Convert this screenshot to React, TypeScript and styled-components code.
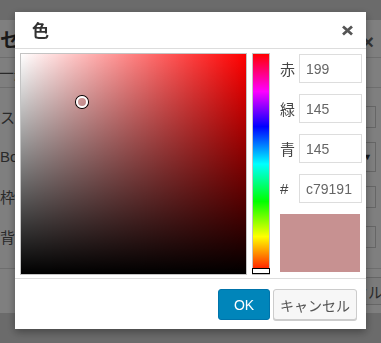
import React from 'react';
import styled, { createGlobalStyle } from 'styled-components';

const GlobalStyle = createGlobalStyle`
  html, body {
    margin: 0;
    padding: 0;
  }
  body {
    width: 381px;
    height: 343px;
    overflow: hidden;
    background: #d6d6d6;
    font-family: "Liberation Sans", "Noto Sans CJK JP", sans-serif;
  }
`;

// --- background page (the table-cell dialog behind) ---
const Page = styled.div`
  padding-top: 20px;
  height: 343px;
  box-sizing: border-box;
`;

const UnderPanel = styled.div`
  margin-left: -20px;
  width: 420px;
  height: 293px;
  background: #fff;
  display: flex;
  flex-direction: column;
  color: #555;
`;

const UnderHeader = styled.div`
  height: 38px;
  border-bottom: 1px solid #ddd;
  display: flex;
  align-items: center;
  justify-content: space-between;
  padding: 0 26px 0 20px;
  box-sizing: border-box;
`;

const UnderTitle = styled.div`
  font-size: 19px;
  font-weight: bold;
  color: #333;
`;

const UnderClose = styled.div`
  font-size: 20px;
  font-weight: bold;
  color: #666;
  margin-top: 8px;
`;

const UnderTabs = styled.div`
  height: 30px;
  border-bottom: 1px solid #ddd;
  display: flex;
  align-items: center;
  padding-left: 19px;
  font-size: 15px;
  box-sizing: border-box;
`;

const UnderForm = styled.div`
  flex: 1;
  display: flex;
  flex-direction: column;
  padding: 14px 24px 0 20px;
  gap: 11px;
  border-bottom: 1px solid #ddd;
`;

const UnderRow = styled.div`
  height: 29px;
  display: flex;
  align-items: center;
  justify-content: space-between;
  font-size: 15px;
`;

const UnderInput = styled.div<{ select?: boolean }>`
  width: 76px;
  height: ${p => (p.select ? 30 : 22)}px;
  border: 1px solid #ccc;
  box-sizing: border-box;
  display: flex;
  align-items: center;
  justify-content: flex-end;
  padding-right: 3px;
  font-size: 9px;
  color: #333;
`;

const UnderFooter = styled.div`
  height: 44px;
  display: flex;
  justify-content: flex-end;
  align-items: center;
  padding-right: 8px;
`;

const UnderButton = styled.div`
  height: 28px;
  width: 80px;
  padding: 0 8px;
  box-sizing: border-box;
  border: 1px solid #ccc;
  border-radius: 3px;
  background: #f7f7f7;
  display: flex;
  align-items: center;
  justify-content: flex-end;
  font-size: 15px;
`;

const Overlay = styled.div`
  position: fixed;
  inset: 0;
  background: rgba(0, 0, 0, 0.5);
`;

// --- colour dialog ---
const Dialog = styled.div`
  position: fixed;
  left: 15px;
  top: 12px;
  width: 351px;
  height: 317px;
  background: #fff;
  box-shadow: 0 3px 8px rgba(0, 0, 0, 0.35);
  display: flex;
  flex-direction: column;
`;

const Header = styled.div`
  height: 37px;
  border-bottom: 1px solid #ddd;
  display: flex;
  align-items: center;
  justify-content: space-between;
  padding: 0 12px 0 17px;
  box-sizing: border-box;
`;

const Title = styled.div`
  font-size: 17px;
  font-weight: bold;
  color: #333;
  margin-top: -1px;
`;

const CloseButton = styled.div`
  width: 13px;
  height: 11px;
  display: flex;
  cursor: pointer;
`;

const Body = styled.div`
  display: flex;
  padding: 4px 4px 3px 5px;
`;

const SatBox = styled.div`
  position: relative;
  width: 225px;
  height: 220px;
  border: 1px solid #c4c4c4;
`;

const SatLayer = styled.div<{ layer: 'white' | 'black' }>`
  position: absolute;
  inset: 0;
  background: ${p =>
    p.layer === 'white'
      ? 'linear-gradient(to right, #fff, rgba(255,255,255,0))'
      : 'linear-gradient(to bottom, rgba(0,0,0,0), #000)'};
`;

const Cursor = styled.div`
  position: absolute;
  width: 8px;
  height: 8px;
  border: 2px solid #fff;
  border-radius: 50%;
  box-shadow: 0 0 0 1px #000;
  transform: translate(-50%, -50%);
`;

const HueBar = styled.div`
  position: relative;
  width: 16px;
  height: 220px;
  margin-left: 5px;
  border: 1px solid #c4c4c4;
  background: linear-gradient(
    to bottom,
    #f00 0%,
    #f0f 17%,
    #00f 33%,
    #0ff 50%,
    #0f0 67%,
    #ff0 83%,
    #f00 100%
  );
`;

const HueMarker = styled.div`
  position: absolute;
  left: -1px;
  right: -1px;
  height: 4px;
  background: #fff;
  border: 1px solid #000;
  transform: translateY(-100%);
`;

const Side = styled.div`
  display: flex;
  flex-direction: column;
  margin-left: 10px;
  padding-top: 1px;
  gap: 11px;
`;

const Field = styled.div`
  display: flex;
  align-items: center;
`;

const FieldLabel = styled.label`
  width: 19px;
  font-size: 15px;
  color: #444;
`;

const FieldInput = styled.input`
  width: 63px;
  height: 29px;
  box-sizing: border-box;
  border: 1px solid #ddd;
  padding: 0 0 0 6px;
  font-family: "Liberation Sans", "Noto Sans CJK JP", sans-serif;
  font-size: 14px;
  color: #666;
  outline: none;
`;

const Preview = styled.div`
  width: 80px;
  height: 58px;
`;

const Footer = styled.div`
  border-top: 1px solid #ddd;
  flex: 1;
  display: flex;
  justify-content: flex-end;
  align-items: flex-start;
  gap: 3px;
  padding: 10px 9px 0 0;
`;

const Button = styled.button<{ primary?: boolean }>`
  height: 31px;
  padding: 0;
  border-radius: 3px;
  font-family: "Liberation Sans", "Noto Sans CJK JP", sans-serif;
  font-size: 14px;
  cursor: pointer;
  width: ${p => (p.primary ? 52 : 84)}px;
  background: ${p => (p.primary ? '#0085ba' : '#f7f7f7')};
  border: 1px solid ${p => (p.primary ? '#0073aa' : '#ccc')};
  color: ${p => (p.primary ? '#fff' : '#555')};
  box-shadow: ${p => (p.primary ? 'none' : '0 1px 0 #ccc')};
`;

const toHex = (n: number) => n.toString(16).padStart(2, '0');

const App: React.FC = () => {
  const rgb = { r: 199, g: 145, b: 145 };
  const max = Math.max(rgb.r, rgb.g, rgb.b);
  const min = Math.min(rgb.r, rgb.g, rgb.b);
  const sat = max === 0 ? 0 : (max - min) / max;
  const val = max / 255;
  const hex = toHex(rgb.r) + toHex(rgb.g) + toHex(rgb.b);

  const fields = [
    { label: '赤', value: String(rgb.r) },
    { label: '緑', value: String(rgb.g) },
    { label: '青', value: String(rgb.b) },
    { label: '#', value: hex },
  ];

  return (
    <>
      <GlobalStyle />
      <Page>
        <UnderPanel>
          <UnderHeader>
            <UnderTitle>セ</UnderTitle>
            <UnderClose>×</UnderClose>
          </UnderHeader>
          <UnderTabs>一般</UnderTabs>
          <UnderForm>
            <UnderRow>
              スタ<UnderInput />
            </UnderRow>
            <UnderRow>
              Bor<UnderInput select>▼</UnderInput>
            </UnderRow>
            <UnderRow>
              枠線<UnderInput />
            </UnderRow>
            <UnderRow>
              背景<UnderInput />
            </UnderRow>
          </UnderForm>
          <UnderFooter>
            <UnderButton>セル</UnderButton>
          </UnderFooter>
        </UnderPanel>
      </Page>
      <Overlay />
      <Dialog>
        <Header>
          <Title>色</Title>
          <CloseButton>
            <svg width="13" height="11" viewBox="0 0 13 11">
              <path d="M2 1.5 L11 9.5 M11 1.5 L2 9.5" stroke="#555" strokeWidth="2.8" strokeLinecap="butt" />
            </svg>
          </CloseButton>
        </Header>
        <Body>
          <SatBox style={{ background: '#f00' }}>
            <SatLayer layer="white" />
            <SatLayer layer="black" />
            <Cursor style={{ left: `${sat * 100}%`, top: `${(1 - val) * 100}%` }} />
          </SatBox>
          <HueBar>
            <HueMarker style={{ top: '100%' }} />
          </HueBar>
          <Side>
            {fields.map(f => (
              <Field key={f.label}>
                <FieldLabel>{f.label}</FieldLabel>
                <FieldInput defaultValue={f.value} />
              </Field>
            ))}
            <Preview style={{ background: `#${hex}` }} />
          </Side>
        </Body>
        <Footer>
          <Button primary>OK</Button>
          <Button>キャンセル</Button>
        </Footer>
      </Dialog>
    </>
  );
};

export default App;
